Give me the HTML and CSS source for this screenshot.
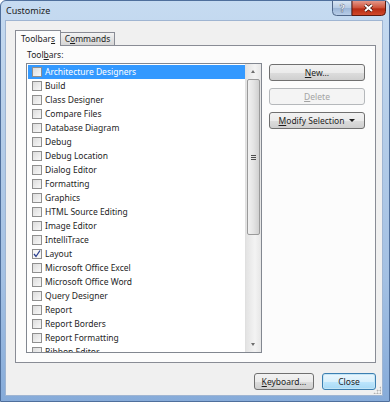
FILE: index.html
```html
<!DOCTYPE html>
<html lang="en">
<head>
    <meta charset="UTF-8">
    <title>Customize</title>
    <link rel="stylesheet" href="styles.css">
</head>
<body>
    <div class="window">
        <div class="titlebar">
            <span class="title">Customize</span>
            <svg class="caption" width="54" height="15" viewBox="0 0 54 15">
                <defs>
                    <linearGradient id="gHelp" x1="0" y1="0" x2="0" y2="1">
                        <stop offset="0" stop-color="#d8e5f3"/>
                        <stop offset="0.5" stop-color="#b5cae3"/>
                        <stop offset="0.51" stop-color="#9cb6d7"/>
                        <stop offset="1" stop-color="#b9cee8"/>
                    </linearGradient>
                    <linearGradient id="gClose" x1="0" y1="0" x2="0" y2="1">
                        <stop offset="0" stop-color="#e4988a"/>
                        <stop offset="0.45" stop-color="#cf553d"/>
                        <stop offset="0.55" stop-color="#b72c14"/>
                        <stop offset="1" stop-color="#d24a2c"/>
                    </linearGradient>
                </defs>
                <path d="M0.5 0 V10.5 Q0.5 14.5 4.5 14.5 H20 V0" fill="url(#gHelp)" stroke="#4f6688"/>
                <text x="10.5" y="11" text-anchor="middle" font-family="DejaVu Sans, sans-serif" font-weight="bold" font-size="10" fill="#fff" stroke="#3a4a66" stroke-width="0.4">?</text>
                <path d="M20 0 V14.5 H49.5 Q53.5 14.5 53.5 10.5 V0" fill="url(#gClose)" stroke="#5a1a10"/>
                <path d="M33 4 L40 10 M40 4 L33 10" stroke="#3b0d05" stroke-width="3.2"/>
                <path d="M33 4 L40 10 M40 4 L33 10" stroke="#fff" stroke-width="2"/>
            </svg>
        </div>
        <div class="client">
            <div class="tabs">
                <span class="tab active">Toolbar<u>s</u></span>
                <span class="tab">C<u>o</u>mmands</span>
            </div>
            <div class="panel">
                <div class="label">Tool<u>b</u>ars:</div>
                <div class="row">
                    <div class="listbox">
                        <ul class="items">
                            <li class="selected"><span class="check"></span>Architecture Designers</li>
                            <li><span class="check"></span>Build</li>
                            <li><span class="check"></span>Class Designer</li>
                            <li><span class="check"></span>Compare Files</li>
                            <li><span class="check"></span>Database Diagram</li>
                            <li><span class="check"></span>Debug</li>
                            <li><span class="check"></span>Debug Location</li>
                            <li><span class="check"></span>Dialog Editor</li>
                            <li><span class="check"></span>Formatting</li>
                            <li><span class="check"></span>Graphics</li>
                            <li><span class="check"></span>HTML Source Editing</li>
                            <li><span class="check"></span>Image Editor</li>
                            <li><span class="check"></span>IntelliTrace</li>
                            <li><span class="check checked"><svg width="8" height="8" viewBox="0 0 8 8"><path d="M1 4 L3 6.5 L7 0.5" fill="none" stroke="#2a3f8f" stroke-width="1.3"/></svg></span>Layout</li>
                            <li><span class="check"></span>Microsoft Office Excel</li>
                            <li><span class="check"></span>Microsoft Office Word</li>
                            <li><span class="check"></span>Query Designer</li>
                            <li><span class="check"></span>Report</li>
                            <li><span class="check"></span>Report Borders</li>
                            <li><span class="check"></span>Report Formatting</li>
                            <li><span class="check"></span>Ribbon Editor</li>
                        </ul>
                        <div class="scrollbar">
                            <span class="arrow up"></span>
                            <div class="track">
                                <div class="thumb"><span class="grip"></span></div>
                            </div>
                            <span class="arrow down"></span>
                        </div>
                    </div>
                    <div class="side">
                        <button class="btn"><u>N</u>ew...</button>
                        <button class="btn" disabled><u>D</u>elete</button>
                        <button class="btn"><u>M</u>odify Selection <span class="drop"></span></button>
                    </div>
                </div>
            </div>
            <div class="footer">
                <button class="btn keyboard"><u>K</u>eyboard...</button>
                <button class="btn default close-btn">Close</button>
            </div>
            <span class="sizegrip"></span>
        </div>
    </div>
</body>
</html>
```

FILE: styles.css
```css
body {
    margin: 0;
    font-family: "Noto Sans", "Liberation Sans", sans-serif;
    font-size: 8.5px;
    color: #1e1e1e;
    background: #fff;
}
.window {
    width: 390px;
    height: 402px;
    box-sizing: border-box;
    display: flex;
    flex-direction: column;
    background: linear-gradient(to bottom, #c6dbf1 0%, #b6cee9 30%, #a3c0e3 70%, #86abd9 100%);
    border: 1px solid #4f6f9c;
    border-radius: 6px 6px 0 0;
}
.titlebar {
    height: 20px;
    display: flex;
    align-items: flex-start;
}
.title {
    padding-left: 5px;
    line-height: 19px;
    font-size: 9px;
    color: #1b1b1b;
}
.caption {
    display: block;
    margin-left: auto;
    margin-right: 3px;
}
.client {
    position: relative;
    flex: 1;
    margin: 0 6px 7px 4px;
    padding: 9px 6px 5px 9px;
    background: #f0f0f0;
    border: 1px solid #9fb5d2;
    display: flex;
    flex-direction: column;
}
.tabs {
    display: flex;
    align-items: flex-end;
    height: 15px;
    position: relative;
    z-index: 1;
}
.tab {
    box-sizing: border-box;
    width: 54px;
    height: 13px;
    line-height: 12px;
    border: 1px solid #898c95;
    border-bottom: none;
    border-left: none;
    background: linear-gradient(to bottom, #f3f3f3, #e3e3e3 50%, #d6d6d6);
    text-align: center;
    white-space: nowrap;
}
.tab.active {
    width: 46px;
    height: 16px;
    line-height: 15px;
    border-left: 1px solid #898c95;
    background: #fcfcfc;
    margin-bottom: -1px;
}
.panel {
    height: 318px;
    box-sizing: border-box;
    border: 1px solid #898c95;
    background: #fcfcfc;
    padding: 2px 10px 0 10px;
}
.label {
    height: 15px;
    line-height: 14px;
    padding-left: 1px;
}
.row {
    display: flex;
    gap: 7px;
}
.listbox {
    width: 238px;
    height: 290px;
    box-sizing: border-box;
    border: 1px solid #828790;
    background: #fff;
    display: flex;
    overflow: hidden;
}
.items {
    list-style: none;
    margin: 0;
    padding: 1px 0 0 1px;
    flex: 1;
    overflow: hidden;
}
.items li {
    height: 14px;
    line-height: 14px;
    padding-left: 4px;
    display: flex;
    align-items: center;
    white-space: nowrap;
}
.items li.selected {
    background: #3399ff;
    color: #fff;
}
.check {
    width: 8px;
    height: 8px;
    border: 1px solid #8f8f8f;
    background: linear-gradient(135deg, #dcdcdc, #f8f8f8);
    margin-right: 3px;
    display: flex;
    align-items: center;
    justify-content: center;
    flex-shrink: 0;
}
.check.checked {
    background: #f6f6f6;
}
.scrollbar {
    width: 15px;
    display: flex;
    flex-direction: column;
    background: linear-gradient(to right, #e3e3e3, #f3f3f3 60%, #e6e6e6);
    border-left: 1px solid #e0e0e0;
}
.arrow {
    height: 15px;
    display: block;
    position: relative;
}
.arrow::after {
    content: "";
    position: absolute;
    left: 5px;
    top: 6px;
    border-left: 2.5px solid transparent;
    border-right: 2.5px solid transparent;
}
.arrow.up::after {
    border-bottom: 3px solid #6d6d6d;
}
.arrow.down::after {
    border-top: 3px solid #6d6d6d;
}
.track {
    flex: 1;
}
.thumb {
    margin: 0 1px;
    height: 156px;
    box-sizing: border-box;
    border: 1px solid #9a9a9a;
    border-radius: 2px;
    background: linear-gradient(to right, #f1f1f1, #e4e4e4 50%, #d0d0d0);
    display: flex;
    align-items: center;
    justify-content: center;
}
.grip {
    width: 5px;
    height: 5px;
    background: repeating-linear-gradient(to bottom, #4d4d4d 0 1px, transparent 1px 2px);
}
.side {
    padding-top: 1px;
    display: flex;
    flex-direction: column;
    gap: 7px;
}
.btn {
    font-family: inherit;
    font-size: 8.5px;
    color: #1e1e1e;
    width: 96px;
    height: 17px;
    padding: 0;
    border: 1px solid #707070;
    border-radius: 3px;
    background: linear-gradient(to bottom, #f2f2f2 0%, #ebebeb 50%, #dddddd 51%, #cfcfcf 100%);
    display: flex;
    align-items: center;
    justify-content: center;
}
.btn:disabled {
    color: #a3a3a3;
    border-color: #b5b8bb;
    background: #f4f4f4;
}
.drop {
    margin-left: 5px;
    border-left: 3px solid transparent;
    border-right: 3px solid transparent;
    border-top: 3px solid #1e1e1e;
}
.footer {
    margin-top: 10px;
    display: flex;
    justify-content: flex-end;
    gap: 8px;
}
.keyboard {
    width: 60px;
}
.close-btn {
    width: 54px;
    border-color: #3c7fb1;
    background: linear-gradient(to bottom, #eaf6fd 0%, #d9f0fc 50%, #bee6fd 51%, #a7d9f5 100%);
    box-shadow: inset 0 0 0 1px #c4e5f6;
}
.sizegrip {
    position: absolute;
    right: 1px;
    bottom: 1px;
    width: 8px;
    height: 8px;
    background: radial-gradient(circle, #b0b0b0 0.8px, transparent 1.2px) 0 0 / 3px 3px;
    clip-path: polygon(100% 0, 100% 100%, 0 100%);
}
```
